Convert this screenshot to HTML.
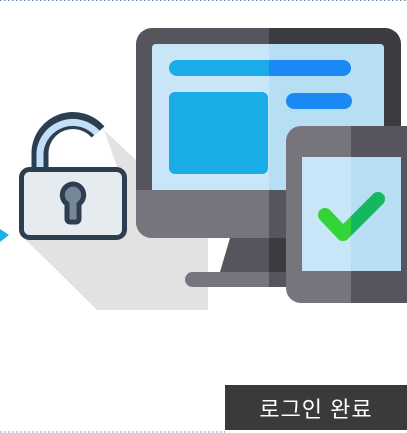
<!DOCTYPE html>
<html><head><meta charset="utf-8"><style>
html,body{margin:0;padding:0;width:407px;height:433px;overflow:hidden;background:#fff}
.lbl{position:absolute;left:225px;top:385px;width:182px;height:45px;background:#3a3a3a;color:#fff;font:22px "Liberation Sans","Noto Sans CJK KR",sans-serif;display:flex;align-items:center;justify-content:center;letter-spacing:1px}
</style></head><body>
<svg width="407" height="433" style="position:absolute;left:0;top:0">
<line x1="0" y1="0.5" x2="407" y2="0.5" stroke="#6a86a8" stroke-dasharray="1.5 2.5"/>
<line x1="0" y1="432" x2="225" y2="432" stroke="#6a86a8" stroke-dasharray="1.5 2.5"/>
<polygon points="0,229 9,235 0,242" fill="#1ab0e5"/>
<polygon points="26,240 97,310 208,310 208,238 136,160 104,130 120,175" fill="#e2e2e2"/>
<polygon points="230,238 269,238 269,272 220,272" fill="#56545c"/>
<rect x="269" y="238" width="20" height="34" fill="#3c3b41"/>
<rect x="185" y="272" width="110" height="15" rx="7.5" fill="#77747d"/>
<rect x="269" y="272" width="26" height="15" fill="#56545c"/>
<clipPath id="mc"><rect x="136" y="28" width="265" height="210" rx="16"/></clipPath>
<g clip-path="url(#mc)">
<rect x="136" y="28" width="133" height="210" fill="#56545c"/>
<rect x="269" y="28" width="132" height="210" fill="#3c3b41"/>
<rect x="136" y="190" width="133" height="48" fill="#77747d"/>
<rect x="269" y="190" width="132" height="48" fill="#56545c"/>
</g>
<path d="M156,44 H269 V190 H152 V48 Q152,44 156,44Z" fill="#c9e6f8"/>
<path d="M269,44 H380 Q384,44 384,48 V190 H269Z" fill="#b7dff4"/>
<path d="M177,60 H269 V76 H177 A8,8 0 0 1 177,60Z" fill="#1aace6"/>
<path d="M269,60 H343 A8,8 0 0 1 343,76 H269Z" fill="#1a88f5"/>
<rect x="169" y="92" width="99" height="82" rx="6" fill="#1aace6"/>
<rect x="286" y="93" width="66" height="16" rx="8" fill="#1a88f5"/>
<clipPath id="pc"><rect x="286" y="126" width="140" height="177" rx="15"/></clipPath>
<g clip-path="url(#pc)">
<rect x="286" y="126" width="65" height="177" fill="#77747d"/>
<rect x="351" y="126" width="60" height="177" fill="#56545c"/>
</g>
<rect x="302" y="157" width="49" height="114" fill="#c9e6f8"/>
<rect x="351" y="157" width="50" height="114" fill="#b7dff4"/>
<clipPath id="cl"><rect x="300" y="180" width="51" height="80"/></clipPath>
<clipPath id="cr"><rect x="351" y="180" width="50" height="80"/></clipPath>
<polyline points="325,215 343,234 378,199" fill="none" stroke="#33d43a" stroke-width="14" stroke-linecap="round" stroke-linejoin="round" clip-path="url(#cl)"/>
<polyline points="325,215 343,234 378,199" fill="none" stroke="#13b85f" stroke-width="14" stroke-linecap="round" stroke-linejoin="round" clip-path="url(#cr)"/>
<path d="M40,170 V152 A33,33 0 0 1 98,132" fill="none" stroke="#2c3e50" stroke-width="17"/>
<path d="M40,170 V152 A33,33 0 0 1 97,133" fill="none" stroke="#c3dff8" stroke-width="7"/>
<rect x="21.5" y="169.5" width="103" height="68" rx="8" fill="#e6ebef" stroke="#2c3e50" stroke-width="5"/>
<path d="M73,184 a11,11 0 0 1 6,20 v15 a3,3 0 0 1 -3,3 h-6 a3,3 0 0 1 -3,-3 v-15 a11,11 0 0 1 6,-20z" fill="#768798" stroke="#2c3e50" stroke-width="5"/>
</svg>
<div class="lbl">로그인 완료</div>
</body></html>
